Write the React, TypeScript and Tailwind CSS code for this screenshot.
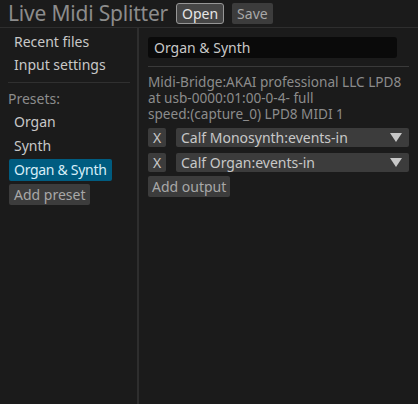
import React, { useState } from "react";

const font = { fontFamily: '"Noto Sans", "Open Sans", sans-serif' };

function Triangle() {
  return (
    <svg width="12" height="9" viewBox="0 0 12 9" className="shrink-0">
      <polygon points="0,0 12,0 6,9" fill="#c8c8c8" />
    </svg>
  );
}

function OutputRow({ label }: { label: string }) {
  return (
    <div className="flex items-center h-[19px] gap-[10px]">
      <button className="w-[18px] h-[19px] rounded-[2px] bg-[#3c3c3c] text-[#c8c8c8] text-[14px] leading-none flex items-center justify-center">
        X
      </button>
      <div className="flex-1 h-[19px] rounded-[2px] bg-[#3c3c3c] flex items-center justify-between pl-[5px] pr-[7px]">
        <span className="text-[14px] text-[#c8c8c8] leading-none">{label}</span>
        <Triangle />
      </div>
    </div>
  );
}

export default function App() {
  const [selected, setSelected] = useState("Organ & Synth");
  const presets = ["Organ", "Synth", "Organ & Synth"];

  return (
    <div className="w-[418px] h-[404px] bg-[#1b1b1b] flex flex-col overflow-hidden" style={font}>
      {/* top bar */}
      <div className="h-[28px] shrink-0 border-b border-[#2e2e2e] flex items-center pl-[8px] gap-[8px]">
        <span className="text-[21px] text-[#8c8c8c] leading-none tracking-[-0.2px]">Live Midi Splitter</span>
        <button className="h-[21px] px-[5px] rounded-[3px] border border-[#969696] bg-[#464646] text-[14px] text-[#e6e6e6] leading-none">
          Open
        </button>
        <button className="h-[21px] px-[5px] rounded-[2px] bg-[#3c3c3c] text-[14px] text-[#a8a8a8] leading-none">
          Save
        </button>
      </div>

      <div className="flex flex-1 min-h-0">
        {/* sidebar */}
        <div className="w-[139px] shrink-0 border-r-2 border-[#2e2e2e] pt-[2px] pl-[8px] pr-[7px] flex flex-col">
          <div className="h-[22px] flex items-center pl-[6px] text-[14px] text-[#c8c8c8]">Recent files</div>
          <div className="h-[22px] mt-[1px] flex items-center pl-[6px] text-[14px] text-[#c8c8c8]">Input settings</div>
          <div className="h-px bg-[#303030] mt-[7px]" />
          <div className="h-[22px] mt-[4px] flex items-center text-[14px] text-[#8c8c8c]">Presets:</div>
          <div className="flex flex-col gap-[2px] mt-[2px]">
            {presets.map((p) => (
              <div key={p} className="h-[22px] flex">
                <button
                  onClick={() => setSelected(p)}
                  className={
                    selected === p
                      ? "h-[22px] ml-[1px] px-[5px] rounded-[2px] bg-[#005c80] text-[14px] text-[#d8eef8] leading-none tracking-[-0.3px]"
                      : "h-[22px] pl-[6px] text-[14px] text-[#c8c8c8] leading-none"
                  }
                >
                  {p}
                </button>
              </div>
            ))}
            <div className="flex mt-[1px]">
              <button className="h-[21px] ml-[1px] px-[5px] rounded-[2px] bg-[#3c3c3c] text-[14px] text-[#a8a8a8] leading-none">
                Add preset
              </button>
            </div>
          </div>
        </div>

        {/* main */}
        <div className="flex-1 pt-[9px] pl-[9px] pr-[9px] flex flex-col">
          <div className="w-[249px] h-[21px] rounded-[3px] bg-[#0a0a0a] flex items-center pl-[6px] text-[14px] text-[#c8c8c8]">
            Organ &amp; Synth
          </div>
          <div className="h-px bg-[#3a3a3a] mt-[8px]" />
          <div className="mt-[7px] whitespace-nowrap text-[13.6px] leading-[16px] text-[#8c8c8c]">
            <div>Midi-Bridge:AKAI professional LLC LPD8</div>
            <div>at usb-0000:01:00-0-4- full</div>
            <div>speed:(capture_0) LPD8 MIDI 1</div>
          </div>
          <div className="mt-[6px] flex flex-col gap-[6px]">
            <OutputRow label="Calf Monosynth:events-in" />
            <OutputRow label="Calf Organ:events-in" />
          </div>
          <div className="flex mt-[4px]">
            <button className="h-[21px] px-[4px] rounded-[2px] bg-[#3c3c3c] text-[14px] text-[#a8a8a8] leading-none">
              Add output
            </button>
          </div>
        </div>
      </div>
    </div>
  );
}
